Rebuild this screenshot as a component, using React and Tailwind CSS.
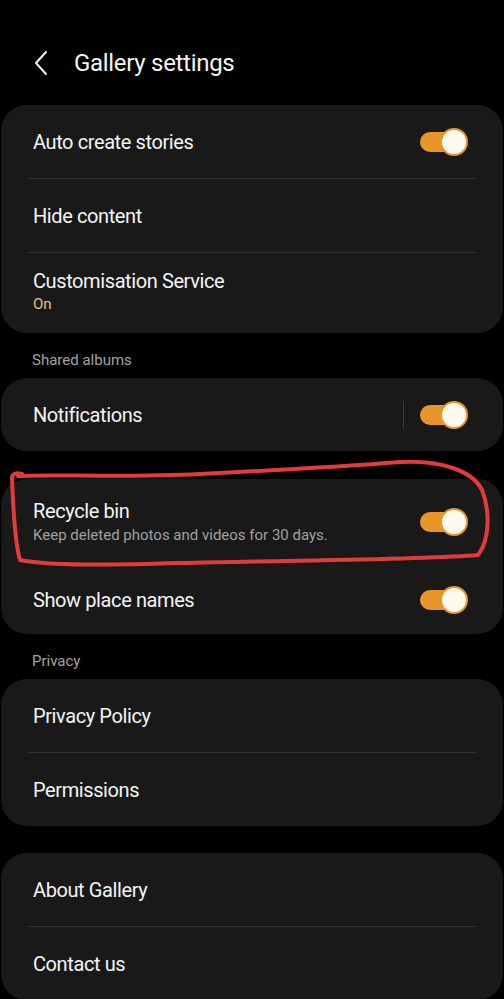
import React from 'react';

function Toggle() {
  return (
    <div className="relative w-[48px] h-[28px] flex items-center">
      <div className="absolute left-0 right-[4px] h-[20px] rounded-full bg-[#e8962a]" />
      <div className="absolute right-0 w-[28px] h-[28px] rounded-full bg-[#fffaf0] border-[2px] border-[#e8962a]" />
    </div>
  );
}

function Row({ title, subtitle, subColor, toggle, divider, sep, h = 'min-h-[73px]' }) {
  return (
    <div>
      <div className={`flex items-center justify-between pl-[32px] pr-[35px] ${h}`}>
        <div className="flex flex-col">
          <span className="text-[20px] leading-[26px] tracking-[-0.4px] text-[#f4f4f4]">{title}</span>
          {subtitle && (
            <span className={`text-[15px] leading-[22px] ${subColor || 'text-[#a0a0a0]'}`}>{subtitle}</span>
          )}
        </div>
        {toggle && (
          <div className="flex items-center">
            {sep && <div className="w-px h-[28px] bg-[#3a3a3a] mr-[16px]" />}
            <Toggle />
          </div>
        )}
      </div>
      {divider && <div className="mx-[26px] h-px bg-[#333333]" />}
    </div>
  );
}

function Card({ children, className = '' }) {
  return <div className={`bg-[#191919] rounded-[26px] mx-[1px] ${className}`}>{children}</div>;
}

function Label({ children }) {
  return <div className="pl-[32px] pt-[10px] text-[15px] text-[#a3a3a3] h-[45px] flex items-center">{children}</div>;
}

export default function App() {
  return (
    <div className="relative bg-black min-h-[999px] w-[504px] overflow-hidden font-['Roboto',sans-serif]">
      <div className="flex items-center h-[105px] pt-[20px] pl-[32px]">
        <svg width="18" height="26" viewBox="0 0 18 26" fill="none">
          <path d="M14 2 L4 13 L14 24" stroke="#f2f2f2" strokeWidth="2" strokeLinecap="round" strokeLinejoin="round" />
        </svg>
        <span className="ml-[24px] text-[24px] tracking-[-0.3px] text-[#f4f4f4]">Gallery settings</span>
      </div>

      <Card>
        <Row title="Auto create stories" toggle divider />
        <Row title="Hide content" divider />
        <div className="flex flex-col justify-center pl-[32px] min-h-[80px] pb-[4px]">
          <span className="text-[20px] leading-[26px] tracking-[-0.4px] text-[#f4f4f4]">Customisation Service</span>
          <span className="text-[15px] leading-[20px] text-[#f0c080]">On</span>
        </div>
      </Card>

      <Label>Shared albums</Label>
      <Card>
        <Row title="Notifications" toggle sep />
      </Card>

      <Card className="mt-[28px]">
        <Row title="Recycle bin" subtitle="Keep deleted photos and videos for 30 days." toggle h="min-h-[86px]" />
        <Row title="Show place names" toggle h="min-h-[69px]" />
      </Card>

      <Label>Privacy</Label>
      <Card>
        <Row title="Privacy Policy" divider />
        <Row title="Permissions" />
      </Card>

      <Card className="mt-[27px]">
        <Row title="About Gallery" divider />
        <Row title="Contact us" />
      </Card>

      <svg className="absolute left-0 top-0 pointer-events-none" width="504" height="999" viewBox="0 0 504 999" fill="none">
        <path
          d="M18 476 C 60 474, 120 478, 200 474 C 280 470, 350 466, 400 462 C 440 460, 472 470, 482 490 C 490 510, 490 540, 478 555 C 420 560, 300 560, 180 563 C 110 565, 50 566, 20 560 C 14 540, 13 500, 12 478 C 12 474, 16 472, 22 474"
          stroke="#e23b3b"
          strokeWidth="4"
          strokeLinecap="round"
          strokeLinejoin="round"
        />
      </svg>
    </div>
  );
}
